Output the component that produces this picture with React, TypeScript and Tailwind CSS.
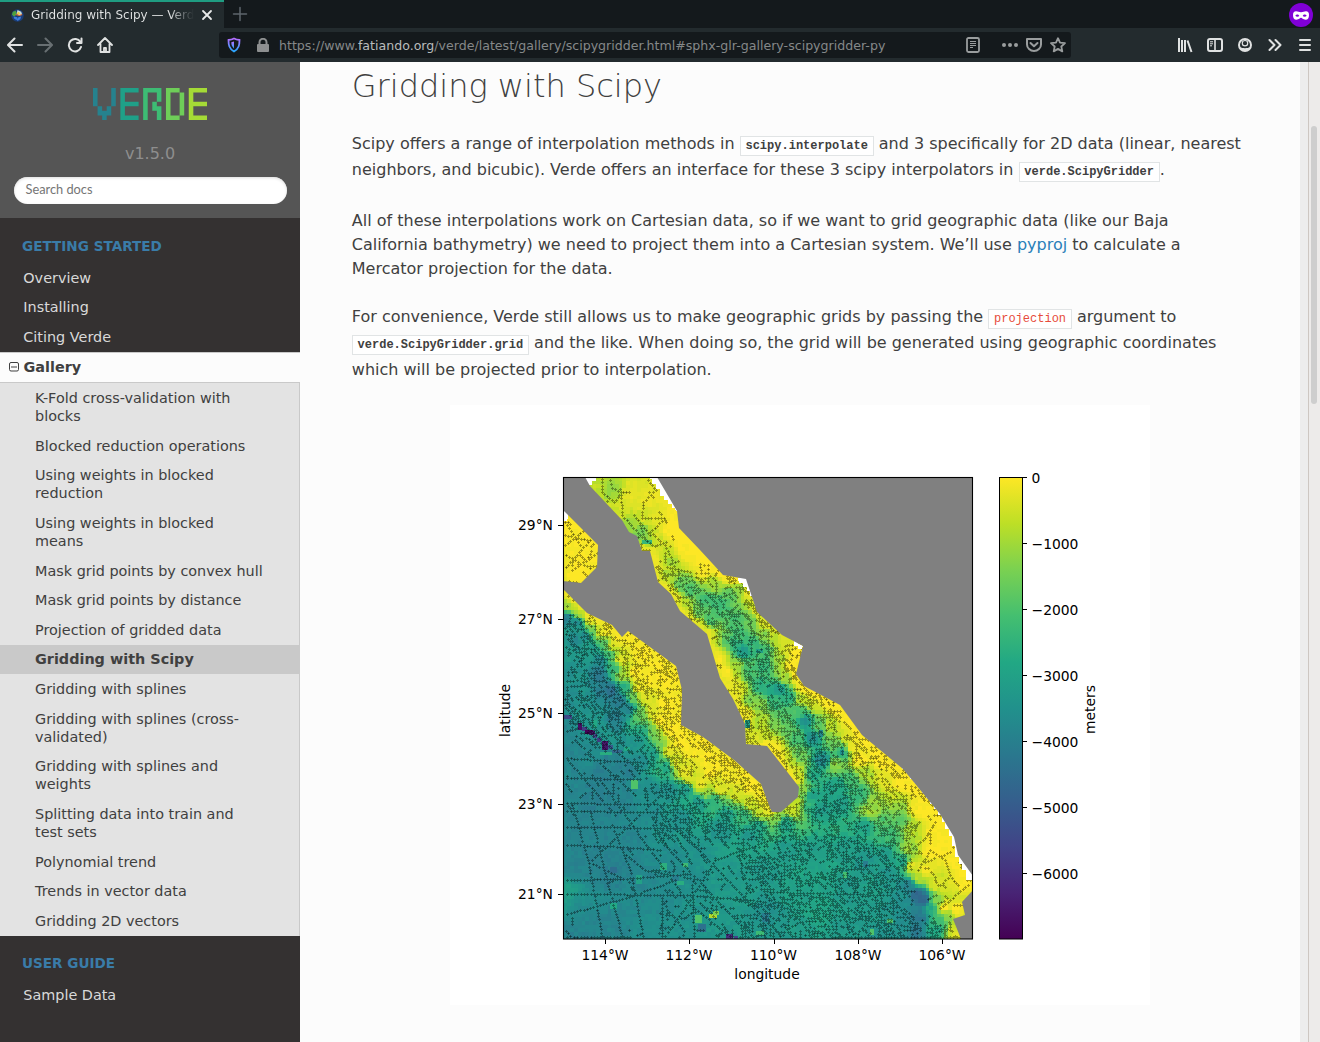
import React from "react";

type Pt = [number, number];
type Sample = [number, number, number];

const BAJA: Pt[] = [
  [563, 477], [585, 477], [590, 486], [622, 520], [629, 532], [637, 536], [642, 551], [650, 551], [658, 582], [671, 594],
  [680, 611], [707, 634], [720, 678], [733, 699], [745, 724], [746, 744], [767, 746], [799, 787], [798, 797], [781, 812],
  [772, 812], [770, 808], [761, 784], [734, 760], [703, 737], [681, 725], [682, 690], [676, 666], [628, 631], [622, 637],
  [612, 625], [587, 613], [563, 589], [563, 581], [581, 583], [597, 567], [598, 545], [563, 510],
];
const MAINLAND: Pt[] = [
  [657, 477], [677, 511], [679, 528], [700, 550], [723, 575], [746, 579], [757, 612], [770, 624], [782, 635], [803, 646],
  [796, 674], [804, 686], [840, 705], [862, 735], [903, 769], [940, 814], [954, 837], [958, 855], [973, 876], [973, 477],
];
const CORNER: Pt[] = [[973, 890], [962, 902], [965, 915], [953, 919], [961, 939], [973, 939]];

/* Relative height: 1 is the surface, 0 is the deepest trench. */
const SAMPLES: Sample[] = [
  [600, 485, 0.9], [612, 490, 0.84], [630, 495, 0.96], [640, 480, 0.95], [650, 500, 0.97], [618, 508, 0.93], [632, 525, 0.85],
  [640, 534, 0.78], [648, 541, 0.83], [660, 520, 0.96], [645, 515, 0.94], [655, 540, 0.93], [670, 530, 1], [684, 550, 1], [705, 570, 1],
  [652, 560, 0.98], [663, 550, 0.92], [670, 560, 0.87], [665, 575, 0.87], [680, 585, 0.76], [690, 590, 0.72], [705, 600, 0.69],
  [720, 605, 0.67], [715, 583, 0.84], [730, 595, 0.74], [740, 590, 0.84], [748, 592, 0.97], [684, 603, 0.87], [698, 612, 0.76],
  [710, 620, 0.7], [735, 620, 0.7], [750, 620, 0.76], [740, 635, 0.69], [755, 645, 0.66], [743, 651, 0.54], [735, 643, 0.64],
  [725, 640, 0.74], [765, 650, 0.7], [765, 635, 0.82], [765, 665, 0.66], [775, 637, 0.88], [785, 645, 0.93], [797, 650, 1],
  [791, 665, 1], [780, 660, 0.86], [786, 678, 0.85], [716, 640, 0.9], [718, 660, 1], [726, 672, 1], [738, 690, 0.95], [735, 665, 0.85],
  [750, 670, 0.7], [760, 685, 0.64], [770, 690, 0.6], [780, 690, 0.53], [788, 697, 0.62], [775, 702, 0.66], [803, 700, 0.88],
  [750, 700, 0.8], [745, 715, 0.98], [760, 705, 0.82], [760, 720, 0.88], [765, 733, 0.9], [775, 725, 0.8], [756, 740, 0.95],
  [785, 715, 0.72], [790, 730, 0.74], [800, 712, 0.7], [798, 740, 0.7], [805, 720, 0.5], [812, 738, 0.5], [822, 760, 0.47],
  [828, 698, 1], [815, 705, 0.92], [830, 725, 0.88], [820, 725, 0.75], [845, 735, 0.94], [835, 743, 0.78], [842, 752, 0.62],
  [852, 747, 0.98], [860, 760, 1], [850, 718, 1], [815, 690, 1], [775, 748, 0.98], [790, 762, 0.9], [798, 775, 0.91], [800, 755, 0.77],
  [813, 775, 0.6], [835, 765, 0.83], [850, 780, 0.7], [880, 760, 1], [900, 785, 1], [865, 772, 0.87], [885, 780, 0.96], [895, 795, 0.93],
  [840, 785, 0.58], [860, 795, 0.66], [875, 800, 0.84], [900, 805, 0.82], [875, 810, 0.84], [870, 812, 0.87], [882, 820, 0.72],
  [900, 820, 0.74], [890, 835, 0.68], [912, 830, 0.88], [915, 805, 0.98], [920, 810, 1], [935, 830, 1], [910, 850, 0.85], [930, 850, 1],
  [912, 865, 0.96], [925, 870, 0.98], [945, 850, 1], [965, 880, 1], [918, 878, 0.9], [903, 862, 0.58], [908, 885, 0.45],
  [918, 895, 0.33], [925, 900, 0.32], [920, 917, 0.4], [930, 908, 0.6], [935, 900, 0.83], [945, 908, 1], [940, 920, 0.68],
  [935, 930, 0.6], [948, 915, 0.83], [955, 930, 0.93], [958, 938, 0.95], [955, 910, 1], [945, 885, 0.95], [935, 885, 0.95],
  [865, 825, 0.57], [885, 855, 0.55], [890, 875, 0.52], [900, 900, 0.5], [905, 930, 0.5], [915, 932, 0.4], [840, 805, 0.56],
  [830, 790, 0.57], [820, 810, 0.55], [815, 850, 0.55], [800, 890, 0.57], [815, 915, 0.59], [780, 930, 0.53], [800, 930, 0.55],
  [765, 915, 0.5], [765, 870, 0.53], [785, 850, 0.54], [850, 850, 0.55], [850, 890, 0.54], [870, 915, 0.54], [880, 935, 0.51],
  [845, 930, 0.54], [865, 860, 0.52], [750, 835, 0.53], [720, 830, 0.51], [700, 850, 0.51], [730, 870, 0.53], [740, 900, 0.54],
  [720, 920, 0.53], [745, 930, 0.53], [700, 910, 0.52], [680, 925, 0.5], [690, 880, 0.49], [670, 860, 0.48], [660, 900, 0.47],
  [650, 930, 0.49], [630, 910, 0.47], [640, 880, 0.45], [610, 870, 0.43], [590, 860, 0.44], [575, 870, 0.45], [566, 890, 0.56],
  [566, 905, 0.54], [575, 910, 0.47], [590, 930, 0.45], [567, 936, 0.44], [610, 925, 0.45], [575, 830, 0.45], [600, 830, 0.45],
  [630, 840, 0.45], [570, 800, 0.45], [595, 800, 0.43], [600, 775, 0.43], [580, 770, 0.46], [567, 750, 0.45], [620, 800, 0.44],
  [650, 815, 0.48], [680, 820, 0.5], [650, 790, 0.48], [670, 790, 0.49], [625, 770, 0.43], [610, 760, 0.44], [640, 760, 0.48],
  [590, 755, 0.47], [567, 730, 0.46], [585, 712, 0.51], [567, 700, 0.48], [600, 725, 0.52], [615, 720, 0.43], [625, 745, 0.5],
  [640, 740, 0.5], [620, 700, 0.4], [605, 688, 0.42], [612, 690, 0.37], [600, 673, 0.4], [580, 665, 0.51], [570, 655, 0.53],
  [567, 670, 0.49], [575, 640, 0.47], [567, 618, 0.4], [578, 622, 0.45], [585, 635, 0.48], [594, 650, 0.53], [600, 660, 0.46],
  [604, 643, 0.74], [592, 630, 0.78], [580, 615, 0.86], [566, 605, 0.86], [573, 608, 0.88], [590, 620, 0.97], [603, 632, 0.98],
  [609, 655, 0.7], [614, 668, 0.66], [621, 675, 0.86], [620, 660, 0.96], [613, 645, 0.95], [617, 637, 1], [640, 655, 1],
  [655, 665, 1], [665, 680, 1], [650, 680, 1], [635, 673, 1], [640, 688, 0.98], [623, 688, 0.62], [632, 697, 0.77], [645, 697, 0.96],
  [628, 708, 0.45], [640, 716, 0.77], [643, 731, 0.62], [653, 712, 0.95], [665, 705, 1], [660, 720, 1], [653, 733, 0.8],
  [660, 745, 0.8], [670, 730, 1], [670, 750, 0.97], [653, 752, 0.55], [667, 767, 0.6], [676, 763, 0.94], [685, 772, 0.97],
  [690, 780, 0.93], [686, 789, 0.53], [700, 785, 0.97], [705, 794, 0.84], [720, 789, 0.95], [713, 801, 0.64], [735, 796, 0.95],
  [730, 804, 0.74], [750, 806, 0.93], [728, 812, 0.54], [700, 801, 0.52], [750, 785, 1], [730, 775, 0.98], [710, 770, 1],
  [710, 755, 1], [690, 750, 1], [680, 740, 1], [745, 814, 0.64], [760, 815, 0.9], [758, 824, 0.57], [765, 808, 0.96],
  [778, 817, 0.82], [792, 810, 0.93], [785, 823, 0.57], [798, 803, 0.9], [803, 790, 0.82], [807, 805, 0.65], [812, 795, 0.57],
  [575, 530, 1], [590, 550, 1], [580, 575, 1],
];

function alongCoast(points: Pt[], value: number) {
  for (let i = 1; i < points.length; i++) {
    const [x0, y0] = points[i - 1];
    const [x1, y1] = points[i];
    const n = Math.ceil(Math.hypot(x1 - x0, y1 - y0) / 9);
    for (let k = 0; k < n; k++) SAMPLES.push([x0 + ((x1 - x0) * k) / n, y0 + ((y1 - y0) * k) / n, value]);
  }
}
alongCoast(MAINLAND.slice(1, 6), 1);
alongCoast(MAINLAND.slice(6, 10), 0.95);
alongCoast(MAINLAND.slice(9, 19), 1);
alongCoast(BAJA.slice(6, 15), 0.97);
alongCoast(BAJA.slice(16, 18), 1);
alongCoast(BAJA.slice(21, 33), 0.99);

/* Isolated cells: x, y, width, height, value. */
const FEATURES: [number, number, number, number, number][] = [
  [564, 715, 8, 4, 0.22], [578, 723, 4, 7, 0.04], [582, 727, 5, 4, 0.18], [585, 730, 8, 4, 0.0], [589, 731, 6, 4, 0.06],
  [593, 734, 4, 4, 0.22], [597, 738, 4, 4, 0.18], [602, 741, 6, 9, 0.06], [608, 745, 5, 4, 0.28], [612, 750, 10, 3, 0.34],
  [600, 752, 12, 3, 0.62], [593, 720, 4, 8, 0.6], [631, 780, 7, 9, 0.72], [624, 747, 6, 4, 0.6], [660, 863, 7, 7, 0.63],
  [636, 875, 6, 9, 0.57], [672, 875, 7, 6, 0.42], [610, 867, 7, 6, 0.36], [610, 903, 7, 6, 0.6], [677, 881, 7, 4, 0.62],
  [683, 863, 5, 4, 0.68], [695, 915, 7, 8, 0.72], [709, 914, 8, 4, 0.88], [713, 911, 6, 4, 0.8], [698, 924, 8, 8, 0.37],
  [726, 934, 7, 5, 0.14], [734, 936, 4, 3, 0.2], [843, 872, 4, 6, 0.7], [887, 919, 6, 4, 0.72], [870, 929, 4, 6, 0.72],
  [863, 861, 5, 6, 0.42], [762, 913, 7, 9, 0.42], [745, 720, 5, 8, 0.57], [819, 730, 4, 7, 0.47], [840, 750, 4, 5, 0.5],
  [642, 540, 10, 4, 0.66], [812, 890, 10, 8, 0.58], [756, 931, 8, 4, 0.68], [756, 649, 7, 4, 0.56],
];

const VIRIDIS: [number, number, number][] = [
  [68, 1, 84], [72, 36, 117], [65, 68, 135], [53, 95, 141], [42, 120, 142], [33, 145, 140], [34, 168, 132], [68, 191, 112],
  [122, 209, 81], [189, 223, 38], [253, 231, 37],
];

function viridis(t: number): string {
  const s = Math.max(0, Math.min(0.9999, t)) * 10;
  const i = Math.floor(s);
  const f = s - i;
  const a = VIRIDIS[i];
  const b = VIRIDIS[i + 1];
  return `rgb(${[0, 1, 2].map((k) => Math.round(a[k] + (b[k] - a[k]) * f)).join(",")})`;
}

function inside(x: number, y: number, poly: Pt[]): boolean {
  let hit = false;
  for (let i = 0, j = poly.length - 1; i < poly.length; j = i++) {
    const [xi, yi] = poly[i];
    const [xj, yj] = poly[j];
    if (yi > y !== yj > y && x < ((xj - xi) * (y - yi)) / (yj - yi) + xi) hit = !hit;
  }
  return hit;
}

function makeRandom(seed: number) {
  let s = seed;
  return () => {
    s = (s * 1664525 + 1013904223) >>> 0;
    return s / 4294967296;
  };
}

function heightAt(x: number, y: number): number {
  let sum = 0;
  let weight = 0;
  for (const [px, py, v] of SAMPLES) {
    const d = (px - x) ** 2 + (py - y) ** 2 + 12;
    const w = 1 / (d * d);
    sum += w * v;
    weight += w;
  }
  return sum / weight;
}

const CELL = 3.7;

function buildRaster(): [string, string][] {
  const rnd = makeRandom(11);
  const buckets = new Map<number, string>();
  for (let y = 477; y < 939; y += CELL) {
    for (let x = 563; x < 973; x += CELL) {
      const n = rnd() - 0.5;
      const v = heightAt(x + CELL / 2, y + CELL / 2);
      const level = Math.round(Math.min(1, v + n * (v > 0.94 ? 0.02 : 0.04)) * 80);
      const d = `M${x.toFixed(1)} ${y.toFixed(1)}h3.8v3.8h-3.8z`;
      buckets.set(level, (buckets.get(level) ?? "") + d);
    }
  }
  return [...buckets].map(([k, d]) => [viridis(k / 80), d]);
}

function buildMarks(): [string, string] {
  const rnd = makeRandom(5);
  const near = new Set<string>();
  let plus = "";
  let dots = "";
  const put = (fx: number, fy: number) => {
    const x = Math.round(fx);
    const y = Math.round(fy);
    if (x < 565 || x > 971 || y < 479 || y > 937) return;
    for (let a = -1; a <= 1; a++) for (let b = -1; b <= 1; b++) if (near.has(`${x + a},${y + b}`)) return;
    if (inside(x, y, BAJA) || inside(x, y, MAINLAND)) return;
    near.add(`${x},${y}`);
    plus += `M${x - 1} ${y}h3v1h-3zM${x} ${y - 1}h1v3h-1z`;
    if (rnd() < 0.15) dots += `M${x} ${y}h1v1h-1z`;
  };
  const track = (pts: Pt[], step = 3.3) => {
    for (let i = 1; i < pts.length; i++) {
      const [x0, y0] = pts[i - 1];
      const [x1, y1] = pts[i];
      const n = Math.max(1, Math.round(Math.hypot(x1 - x0, y1 - y0) / step));
      for (let k = 0; k <= n; k++) put(x0 + ((x1 - x0) * k) / n, y0 + ((y1 - y0) * k) / n);
    }
  };
  // Long survey lines across the open ocean.
  const lines: Pt[][] = [
    [[564, 827], [690, 828]], [[564, 845], [610, 846], [660, 850]], [[564, 811], [650, 812], [760, 814]], [[564, 803], [690, 805]],
    [[564, 880], [620, 879], [690, 874]], [[564, 894], [690, 895], [760, 901]], [[564, 915], [600, 905], [632, 896], [675, 880]],
    [[572, 805], [588, 860], [602, 936]], [[590, 810], [604, 870], [622, 936]], [[612, 825], [630, 870], [643, 936]],
    [[600, 780], [650, 850], [690, 905], [730, 936]], [[626, 855], [645, 870], [700, 880]], [[590, 862], [634, 820], [660, 795]],
    [[590, 862], [632, 883]], [[662, 898], [662, 936]], [[692, 885], [694, 936]], [[668, 932], [690, 900], [715, 860], [770, 840]],
    [[564, 928], [572, 938]], [[564, 937], [700, 938], [960, 937]], [[660, 840], [745, 930]], [[680, 830], [770, 925]],
    [[564, 758], [650, 763]], [[564, 778], [640, 779]], [[568, 760], [615, 815]], [[588, 752], [635, 795]], [[570, 715], [640, 770]],
    [[700, 895], [800, 910], [920, 928]], [[770, 892], [890, 895]],
  ];
  lines.forEach((l) => track(l));
  // Coastal tracks of the upper gulf and the western bay.
  const coastal: Pt[][] = [
    [[602, 479], [602, 492], [614, 502], [621, 492], [612, 488], [610, 480]], [[621, 495], [622, 515], [640, 535], [652, 545]],
    [[648, 480], [656, 490], [643, 502], [642, 518], [664, 518]], [[664, 519], [650, 532], [665, 545], [672, 560]],
    [[634, 515], [650, 535]], [[640, 525], [645, 540]], [[565, 545], [590, 525]], [[566, 567], [590, 540]], [[565, 535], [597, 542]],
    [[572, 570], [597, 553]], [[565, 522], [580, 545]], [[566, 555], [590, 568]], [[764, 642], [775, 652], [795, 648]],
    [[700, 564], [708, 565], [708, 573], [701, 573], [700, 564]], [[672, 568], [690, 572], [692, 580], [670, 590]],
    [[910, 850], [925, 838], [935, 822]], [[918, 870], [930, 850], [945, 860], [950, 875], [940, 885]], [[940, 908], [968, 885]],
    [[925, 862], [950, 852]],
  ];
  coastal.forEach((l) => track(l));
  for (let k = 0; k < 9000; k++) {
    const x = 564 + rnd() * 408;
    const y = 478 + rnd() * 460;
    const openWest = y > 815 && x < 650;
    const middle = y > 840 && x < 740;
    const westBay = y < 590 && x < 600;
    const rightShelf = x > 912 && y > 800 && y < 915;
    const upper = y < 565;
    const bareCoast = (x > 712 && x < 732 && y > 650 && y < 690) || (x > 675 && x < 725 && y > 520 && y < 572);
    let chance = 0.8;
    if (openWest) chance = 0.01;
    else if (bareCoast) chance = 0.01;
    else if (middle) chance = 0.2;
    else if (westBay) chance = 0.13;
    else if (rightShelf) chance = 0.09;
    else if (upper) chance = 0.06;
    else if (y > 755 && x < 615) chance = 0.1;
    else if (y > 740 && x < 650) chance = 0.3;
    if (rnd() > chance) continue;
    const mode = rnd();
    const angle = mode < 0.52 ? 0.75 + rnd() * 0.35 : mode < 0.72 ? 0 : mode < 0.88 ? Math.PI / 2 : -0.3 - rnd() * 0.8;
    const n = 1 + Math.floor(rnd() * 5);
    for (let i = 0; i < n; i++) put(x + Math.cos(angle) * i * 3, y + Math.sin(angle) * i * 3);
  }
  return [plus, dots];
}

const RASTER = buildRaster();
const [PLUSES, DOTS] = buildMarks();
const poly = (p: Pt[]) => p.map((q) => q.join(",")).join(" ");

function Figure() {
  const lat: [string, number][] = [["29°N", 525], ["27°N", 619], ["25°N", 713], ["23°N", 804], ["21°N", 894]];
  const lon: [string, number][] = [["114°W", 605], ["112°W", 689], ["110°W", 773.5], ["108°W", 858], ["106°W", 942]];
  const depth = ["0", "−1000", "−2000", "−3000", "−4000", "−5000", "−6000"];
  return (
    <svg viewBox="450 405 700 600" className="block h-[600px] w-[700px] bg-white" fontFamily="'DejaVu Sans'" fontSize="13.89">
      <defs>
        <clipPath id="frame"><rect x="563" y="477" width="410" height="462" /></clipPath>
        <linearGradient id="scale" x1="0" y1="1" x2="0" y2="0">
          {VIRIDIS.map((c, i) => <stop key={i} offset={i / 10} stopColor={`rgb(${c.join(",")})`} />)}
        </linearGradient>
      </defs>
      <g clipPath="url(#frame)">
        <g shapeRendering="crispEdges">
          {RASTER.map(([c, d]) => <path key={c} d={d} fill={c} />)}
          {FEATURES.map(([x, y, w, h, v], i) => <rect key={i} x={x} y={y} width={w} height={h} fill={viridis(v)} />)}
          <path d={PLUSES} fill="#000" fillOpacity=".36" />
          <path d={DOTS} fill="#000" fillOpacity=".32" />
          <path d="M584 477h12v4h-4v4h-4v3h-4zM650 477h8l22 34h-4l-1-3h-3v-4h-4v-4h-4v-4h-4v-7h-4v-5h-4v-5h-2zM563 510l5 5v4h-1v2h-4zM738 578h9l5 18h-2v-5h-3v-4h-4v-4h-4zM794 641l9 5-1 3h-4v-3h-4z" fill="#fff" />
          <path d="M887 757h5v4h4v4h4v4h4v4h4v6h4v4h4v5h4v5h4v5h4v6h4v5h4v6h4v7h3v7h4v7h3v10h3v11h4v7h3v6h4v10h6v-20l-19-36-15-24-40-48z" transform="translate(1.5 0)" fill="#fff" />
        </g>
        {[BAJA, MAINLAND, CORNER].map((p, i) => <polygon key={i} points={poly(p)} fill="#808080" />)}
      </g>
      <rect x="563.5" y="477.5" width="409" height="461.5" fill="none" stroke="#000" strokeWidth="1.1" />
      <g stroke="#000" strokeWidth="1">
        {lat.map(([t, y]) => <path key={t} d={`M558 ${y + 0.5}h5`} />)}
        {lon.map(([t, x]) => <path key={t} d={`M${Math.round(x) + 0.5} 939v5`} />)}
        {depth.map((t, i) => <path key={t} d={`M1022 ${477.5 + i * 66}h5`} />)}
      </g>
      <rect x="999.5" y="477.5" width="23" height="461.5" fill="url(#scale)" stroke="#000" strokeWidth="1" />
      {lat.map(([t, y]) => <text key={t} x="553" y={y + 5} textAnchor="end">{t}</text>)}
      {lon.map(([t, x]) => <text key={t} x={x} y="960" textAnchor="middle">{t}</text>)}
      {depth.map((t, i) => <text key={t} x="1031.5" y={483 + i * 66}>{t}</text>)}
      <text x="767" y="979" textAnchor="middle">longitude</text>
      <text transform="translate(510 710.5) rotate(-90)" textAnchor="middle">latitude</text>
      <text transform="translate(1095 709.5) rotate(-90)" textAnchor="middle">meters</text>
    </svg>
  );
}

function Logo() {
  const strokes: [string, string][] = [
    ["#26828e", "M0 0h1v4h-1zM4 0h1v4h-1zM1 4h1v1h1v-1h1v2h-1v1h-1v-1h-1z"],
    ["#1fa088", "M6 0h4v1h-3v2h3v1h-3v2h3v1h-4z"],
    ["#3dbc74", "M11 0h4v3h-1v-2h-2v6h-1zM13 3h1v1h1v3h-1v-2h-1z"],
    ["#6ece58", "M16 0h3v1h1v5h-1v1h-3zM17 1v5h2v-5z"],
    ["#a5db36", "M21 0h4v1h-3v2h3v1h-3v2h3v1h-4z"],
  ];
  return (
    <svg viewBox="0 0 25 7" className="h-8 w-[114px]" preserveAspectRatio="none">
      {strokes.map(([c, d]) => <path key={c} d={d} fill={c} fillRule="evenodd" />)}
    </svg>
  );
}

function Icon({ children, className = "" }: { children: React.ReactNode; className?: string }) {
  return (
    <svg viewBox="0 0 16 16" className={`h-4 w-4 shrink-0 ${className}`} fill="none" stroke="currentColor" strokeWidth="2" strokeLinecap="round" strokeLinejoin="round">
      {children}
    </svg>
  );
}

function Browser() {
  return (
    <header className="h-[62px] shrink-0 bg-[#232b2e]">
      <div className="flex h-7 bg-[#14191c]">
        <div className="flex w-56 items-center border-t-2 border-[#1f9d82] bg-[#232b2e] pl-[11px]">
          <svg viewBox="0 0 14 14" className="h-[13px] w-[13px]">
            <circle cx="7" cy="7" r="6.7" fill="#1b3e78" />
            <path d="M2 3l3-1 1 2-1 3-2 1-2-2z" fill="#4da13f" />
            <path d="M8 9l3-1-1 3-3 2-1-2z" fill="#3c7dde" />
            <path d="M7 1l4 2 1 3-3 1-3-2z" fill="#c7dcd4" />
            <path d="M5 6l4 1 3-1" fill="none" stroke="#e66b2c" strokeWidth="1.2" />
            <circle cx="8" cy="4.5" r="1.3" fill="#f2cb3d" />
            <path d="M3 8l4 1-1 3-3-2z" fill="#3c7dde" />
          </svg>
          <span className="ml-[7px] w-[163px] overflow-hidden whitespace-nowrap bg-gradient-to-r from-[#e4e6e6] from-85% to-[#232b2e] bg-clip-text text-[12px] leading-4 text-transparent">Gridding with Scipy — Verd</span>
          <Icon className="ml-[5px] text-[#e8eaea]"><path d="M4 4l8 8M12 4l-8 8" strokeWidth="1.8" /></Icon>
        </div>
        <Icon className="ml-2 mt-1.5 text-[#5e656c]"><path d="M8 1.5v13M1.5 8h13" strokeWidth="1.5" /></Icon>
        <div className="ml-auto mr-[7px] mt-[3px] flex h-6 w-6 items-center justify-center rounded-full bg-[#8000d7]">
          <svg viewBox="0 0 16 9" className="h-[9px] w-4"><path fillRule="evenodd" d="M3 .3c2 0 3 1 5 1s3-1 5-1c2 0 3 1.2 3 3.7 0 3-1 4.7-3.5 4.7S9 6.8 8 6.8 6 8.7 3.5 8.7 0 7 0 4C0 1.5 1 .3 3 .3zM2.3 4.7c1 1.3 3 1.3 4 .2-1-1.8-3-1.7-4-.2zm7.4.2c1 1.1 3 1.1 4-.2-1-1.5-3-1.6-4 .2z" fill="#fff" /></svg>
        </div>
      </div>
      <div className="flex h-[34px] items-center pl-[7px] text-[#e0e2e2]">
        <Icon><path d="M15 8H1.5M7.5 1.5L1 8l6.5 6.5" /></Icon>
        <Icon className="ml-[14px] text-[#686f72]"><path d="M1 8h13.5M8.5 1.5L15 8l-6.5 6.5" /></Icon>
        <Icon className="ml-[14px]"><path d="M13.4 5A6.2 6.2 0 1 0 14 10M14.5 1.5V6H10" /></Icon>
        <Icon className="ml-[14px]"><path d="M1 8l7-7 7 7M3.5 7v8h9V7M7 15v-4h2v4" strokeWidth="1.8" /></Icon>
        <div className="ml-[106px] flex h-[26px] w-[852px] items-center rounded-[3px] bg-[#14191c] text-[#9a9d9e]">
          <svg viewBox="0 0 16 16" className="ml-[7px] h-4 w-4" fill="none">
            <defs><linearGradient id="shield" x1="0" y1="0" x2="0" y2="1"><stop stopColor="#b66cff" /><stop offset="1" stopColor="#28a8ff" /></linearGradient></defs>
            <path d="M8 1.5C6 2.6 4 2.9 2.5 3c0 5 .5 8.500 5.500 11.500 5-3 5.500-6.500 5.500-11.500C12 2.900 10 2.600 8 1.500z" stroke="url(#shield)" strokeWidth="1.8" />
            <path d="M8 4.5v7C6 9.5 5.3 8 5.3 5.2z" fill="url(#shield)" />
          </svg>
          <svg viewBox="0 0 12 14" className="ml-[15px] h-[14px] w-3"><path d="M2.5 7V4.3a3.5 3.5 0 0 1 7 0V7" fill="none" stroke="#8d8f90" strokeWidth="2" /><rect y="6" width="12" height="8" rx="1" fill="#8d8f90" /></svg>
          <span className="ml-[10px] mt-0.5 whitespace-nowrap text-[12.6px] text-[#858889]">https://www.<span className="text-[#b9bcbc]">fatiando.org</span>/verde/latest/gallery/scipygridder.html#sphx-glr-gallery-scipygridder-py</span>
          <Icon className="ml-auto"><rect x="2" y="1" width="12" height="14" rx="1.5" strokeWidth="1.8" /><path d="M5 4.5h6M5 6.5h6M5 8.5h6M5 10.5h3" strokeWidth="1" strokeLinecap="butt" /></Icon>
          <Icon className="ml-[21px]"><g fill="currentColor" stroke="none"><circle cx="2" cy="8" r="2" /><circle cx="8" cy="8" r="2" /><circle cx="14" cy="8" r="2" /></g></Icon>
          <Icon className="ml-2"><path d="M1 2h14v5.5a7 6.5 0 0 1-14 0zM4.5 6L8 9.3 11.5 6" /></Icon>
          <Icon className="ml-2 mr-[5px]"><path d="M8 1.2l2 4.5 5 .5-3.7 3.3 1 4.9L8 11.9l-4.3 2.5 1-4.9L1 6.2l5-.5z" strokeWidth="1.8" /></Icon>
        </div>
        <div className="ml-auto mr-[7px] flex gap-[14px]">
          <Icon><path d="M2 1v14M5 3v12M8 3v12M10.5 3.5l4 11.5" strokeWidth="2" strokeLinecap="butt" /></Icon>
          <Icon><rect x="1" y="2" width="14" height="12" rx="2" /><path d="M8 2v12" strokeWidth="1.6" /><path d="M3 4.8h3M3 6.8h3M3 8.8h2" strokeWidth="1" strokeLinecap="butt" /></Icon>
          <Icon><circle cx="8" cy="8" r="6" /><circle cx="8" cy="6.2" r="2.7" strokeWidth="1.2" /><path d="M3 10c2.5 1.6 7.5 1.6 10 0l-1.5 3-3.5 1-3.5-1z" fill="currentColor" stroke="none" /></Icon>
          <Icon><path d="M2.5 3l5 5-5 5M8.5 3l5 5-5 5" /></Icon>
          <Icon><path d="M3 3h10M3 8h10M3 13h10" /></Icon>
        </div>
      </div>
    </header>
  );
}

const GALLERY = [
  "K-Fold cross-validation with blocks", "Blocked reduction operations", "Using weights in blocked reduction",
  "Using weights in blocked means", "Mask grid points by convex hull", "Mask grid points by distance", "Projection of gridded data",
  "Gridding with Scipy", "Gridding with splines", "Gridding with splines (cross-validated)", "Gridding with splines and weights",
  "Splitting data into train and test sets", "Polynomial trend", "Trends in vector data", "Gridding 2D vectors",
];

function Sidebar() {
  const top = "py-[5.8px] pl-[23.3px] text-[14.4px] leading-[18px] text-[#d9d9d9]";
  const caption = "pl-[22px] text-[13.6px] font-bold uppercase leading-8 text-[#3a7ca8]";
  return (
    <nav className="w-[300px] shrink-0 bg-[#343131]">
      <div className="flex h-[156px] flex-col items-center bg-[#555] pt-[26px]">
        <Logo />
        <div className="mt-[22px] text-[16px] leading-6 text-[#8e8e8e]">v1.5.0</div>
        <div className="mt-[11px] h-[27px] w-[273px] rounded-full bg-white pl-3 font-['Lato'] text-[12.8px] leading-[25px] text-[#757575] shadow-[inset_0_1px_3px_#ddd]">Search docs</div>
      </div>
      <div className={`mt-3 ${caption}`}>Getting started</div>
      <ul className="mt-px">
        <li className={top}>Overview</li>
        <li className={top}>Installing</li>
        <li className={top}>Citing Verde</li>
        <li>
          <div className="flex items-center border-y border-[#c9c9c9] bg-[#fcfcfc] pb-[6.3px] pl-[9px] pt-[5.2px] text-[14.4px] font-bold leading-[18px] text-[#404040]">
            <svg viewBox="0 0 10 10" className="mr-[4.5px] h-[10px] w-[10px]" fill="none" stroke="#404040"><rect x=".5" y=".5" width="9" height="8.5" rx="1.5" /><path d="M2 5h6" /></svg>
            Gallery
          </div>
          <ul className="border-r border-[#c9c9c9] bg-[#e3e3e3]">
            {GALLERY.map((t) => (
              <li key={t} className={`py-[5.825px] pl-[35px] pr-[35px] text-[14.4px] leading-[18px] text-[#404040] ${t === "Gridding with Scipy" ? "bg-[#c9c9c9] font-bold" : ""}`}>{t}</li>
            ))}
          </ul>
        </li>
      </ul>
      <div className={`mt-[11.1px] ${caption}`}>User guide</div>
      <div className={`mt-[1.2px] ${top}`}>Sample Data</div>
    </nav>
  );
}

function Code({ children, red = false }: { children: string; red?: boolean }) {
  return (
    <code className={`border border-[#e1e4e5] bg-white px-[4.8px] py-0.5 font-['Liberation_Mono'] text-[12px] leading-none ${red ? "text-[#e74c3c]" : "font-bold text-[#404040]"}`}>{children}</code>
  );
}

export default function App() {
  return (
    <div className="flex h-[1042px] w-[1320px] flex-col overflow-hidden bg-[#fcfcfc] font-['DejaVu_Sans',sans-serif]">
      <Browser />
      <div className="flex min-h-0 flex-1">
        <Sidebar />
        <main className="min-w-0 flex-1 pl-[51.8px] pr-12 text-[16px] text-[#404040]">
          <h1 className="mt-1 whitespace-nowrap text-[32px] font-extralight leading-10">Gridding with Scipy</h1>
          <p className="mt-[25px] whitespace-nowrap leading-[26px]">
            Scipy offers a range of interpolation methods in <Code>scipy.interpolate</Code> and 3 specifically for 2D data (linear, nearest<br />
            neighbors, and bicubic). Verde offers an interface for these 3 scipy interpolators in <Code>verde.ScipyGridder</Code>.
          </p>
          <p className="mt-[26px] whitespace-nowrap leading-6">
            All of these interpolations work on Cartesian data, so if we want to grid geographic data (like our Baja<br />
            California bathymetry) we need to project them into a Cartesian system. We’ll use <a className="text-[#2980b9]">pyproj</a> to calculate a<br />
            Mercator projection for the data.
          </p>
          <p className="mt-[23px] whitespace-nowrap leading-[26.4px]">
            For convenience, Verde still allows us to make geographic grids by passing the <Code red>projection</Code> argument to<br />
            <Code>verde.ScipyGridder.grid</Code> and the like. When doing so, the grid will be generated using geographic coordinates<br />
            which will be projected prior to interpolation.
          </p>
          <div className="ml-[98.2px] mt-[21.8px] w-[700px]"><Figure /></div>
        </main>
        <div className="w-2 shrink-0 bg-[#ededed]" />
        <div className="w-3 shrink-0 border-l border-[#cdc7c2] bg-[#edebea] pl-0.5 pt-16">
          <div className="h-[278px] w-1.5 rounded-full bg-[#cecece]" />
        </div>
      </div>
    </div>
  );
}
